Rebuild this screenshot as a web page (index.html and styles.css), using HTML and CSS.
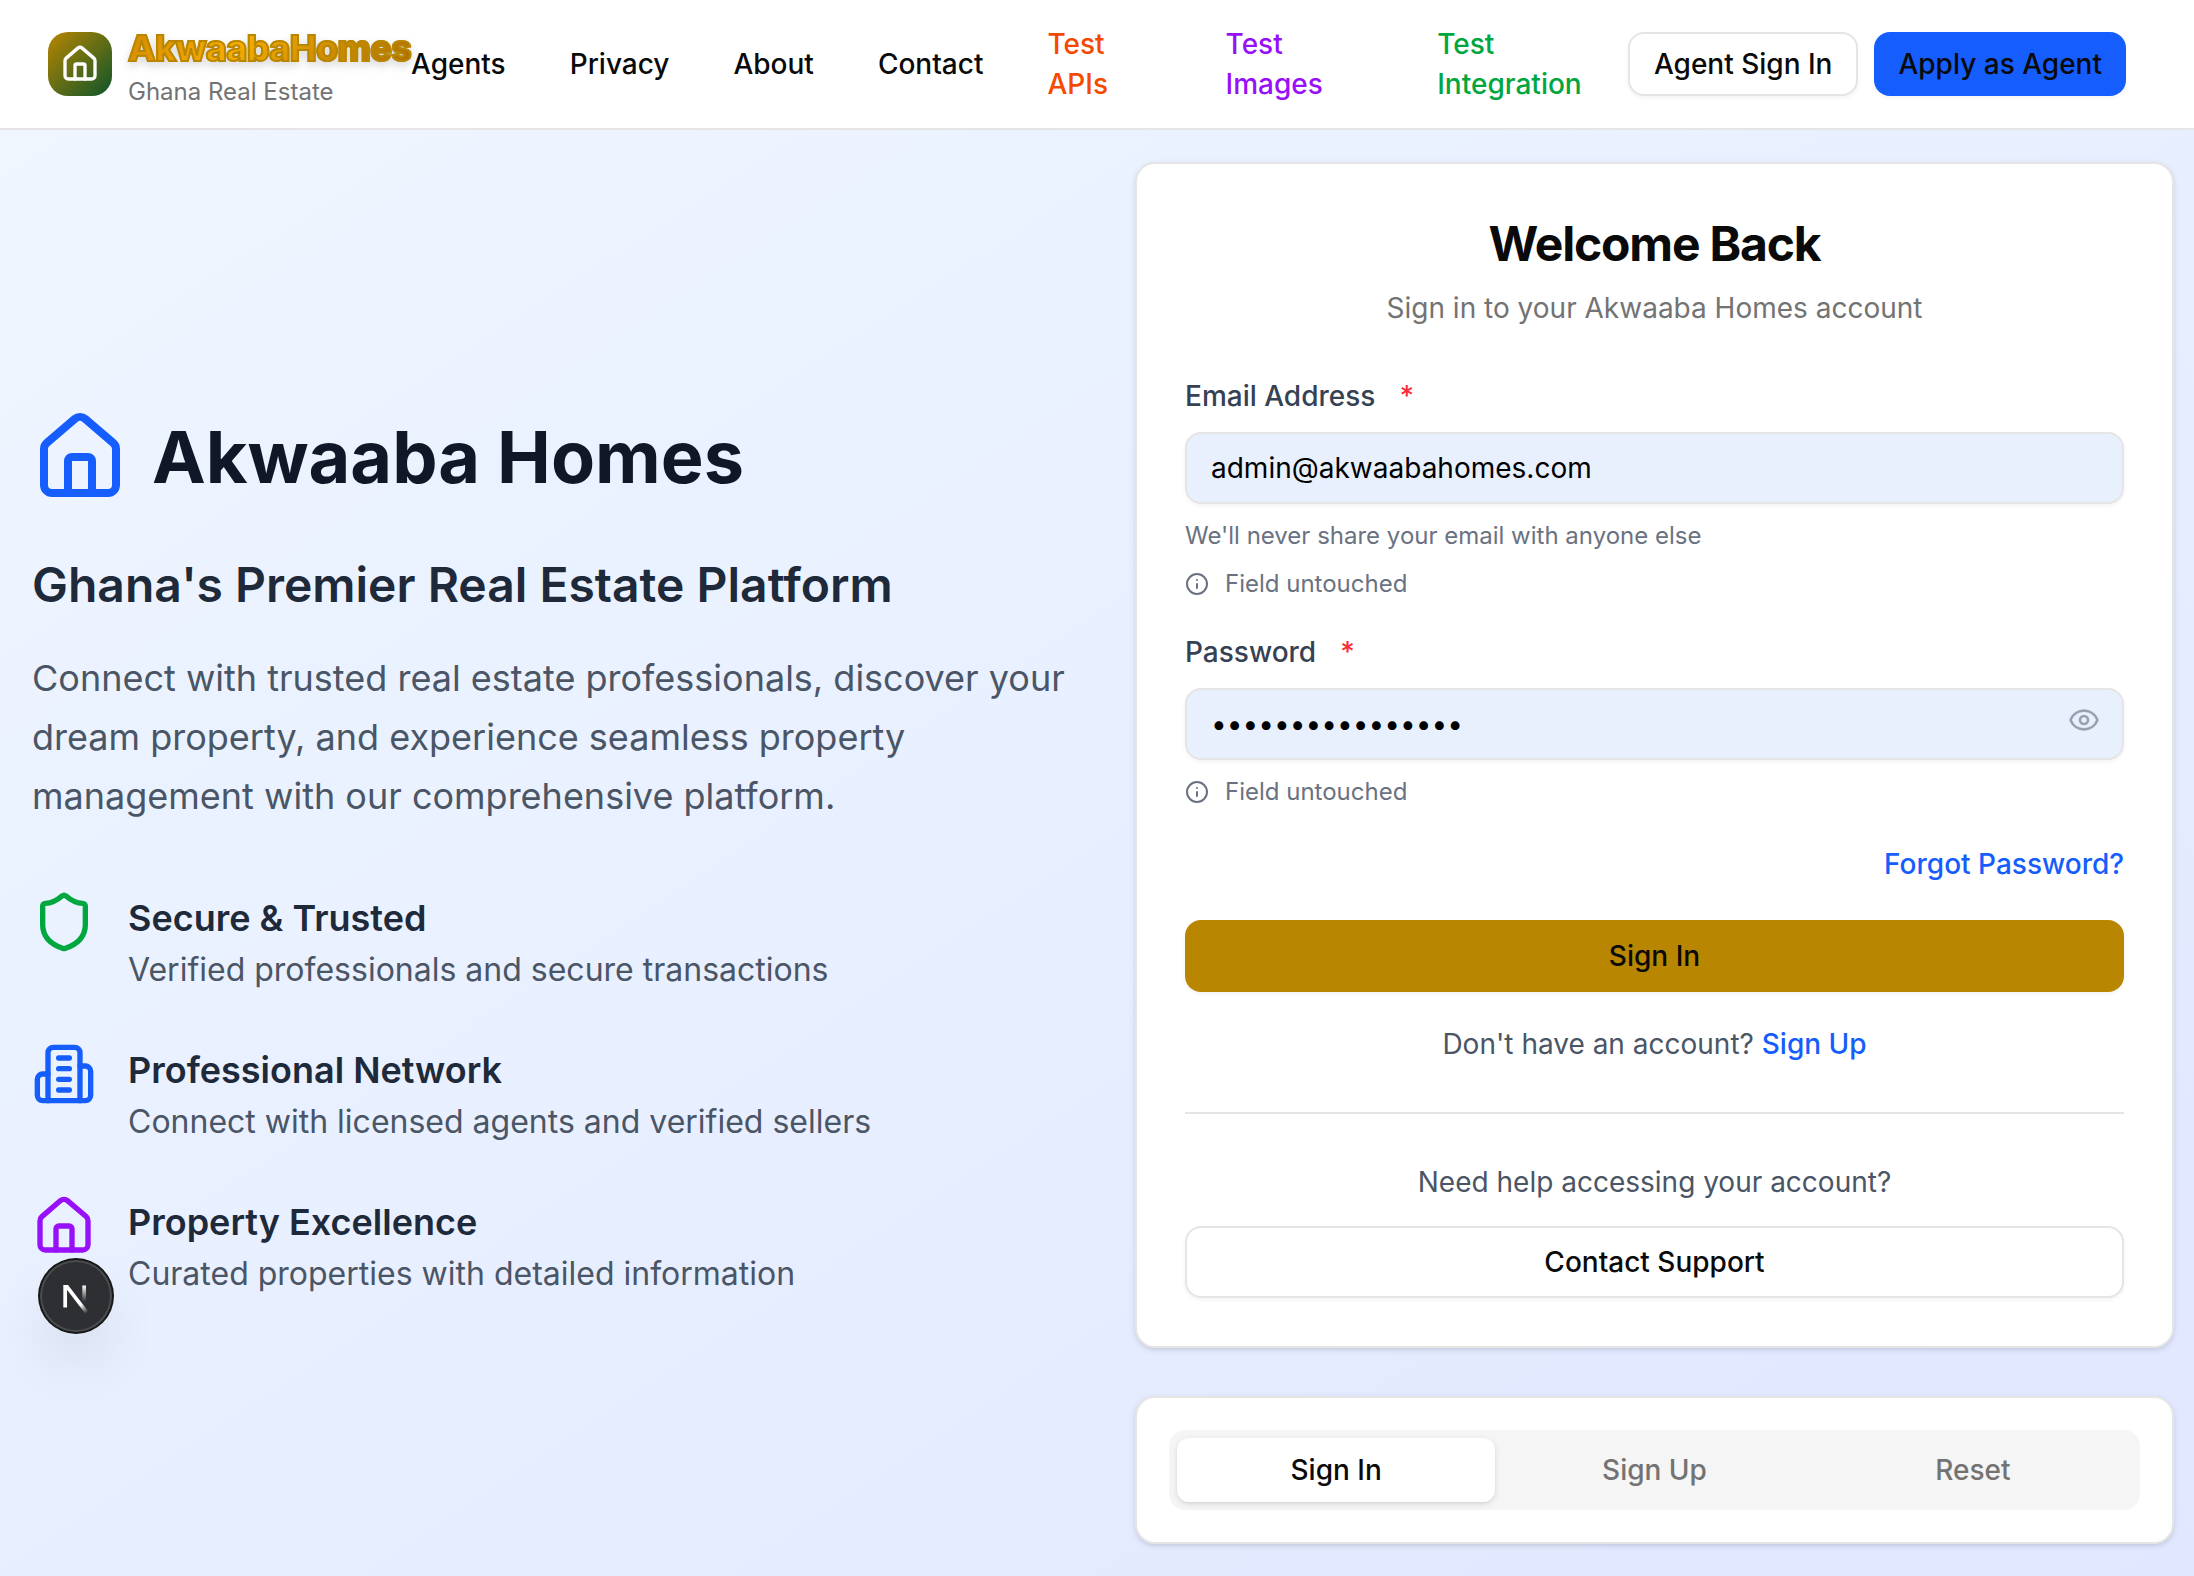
FILE: index.html
```html
<!DOCTYPE html>
<html lang="en">
<head>
<meta charset="utf-8">
<meta name="viewport" content="width=device-width, initial-scale=1">
<title>Sign In | Akwaaba Homes</title>
<link rel="stylesheet" href="styles.css">
</head>
<body>
<svg class="sprite" aria-hidden="true">
  <symbol id="icon-house" viewBox="0 0 24 24">
    <path d="M15 21v-8a1 1 0 0 0-1-1h-4a1 1 0 0 0-1 1v8"/>
    <path d="M3 10a2 2 0 0 1 .709-1.528l7-5.999a2 2 0 0 1 2.582 0l7 5.999A2 2 0 0 1 21 10v9a2 2 0 0 1-2 2H5a2 2 0 0 1-2-2z"/>
  </symbol>
  <symbol id="icon-info" viewBox="0 0 24 24">
    <circle cx="12" cy="12" r="10"/>
    <path d="M12 16v-4"/>
    <path d="M12 8h.01"/>
  </symbol>
</svg>

<header class="site-header">
  <a class="brand" href="#">
    <span class="brand-mark"><svg class="icon icon-md"><use href="#icon-house"/></svg></span>
    <span class="brand-text">
      <span class="brand-name">AkwaabaHomes</span>
      <span class="brand-tag">Ghana Real Estate</span>
    </span>
  </a>
  <nav class="site-nav">
    <a href="#">Agents</a>
    <a href="#">Privacy</a>
    <a href="#">About</a>
    <a href="#">Contact</a>
    <a class="orange" href="#">Test APIs</a>
    <a class="purple" href="#">Test Images</a>
    <a class="green" href="#">Test Integration</a>
  </nav>
  <div class="header-actions">
    <button class="btn btn-sm btn-outline" type="button">Agent Sign In</button>
    <button class="btn btn-sm btn-blue" type="button">Apply as Agent</button>
  </div>
</header>

<main class="auth">
  <section class="intro">
    <div class="intro-brand">
      <svg class="icon icon-xl blue"><use href="#icon-house"/></svg>
      <h1>Akwaaba Homes</h1>
    </div>
    <h2>Ghana's Premier Real Estate Platform</h2>
    <p class="lead">Connect with trusted real estate professionals, discover your dream property, and experience seamless property management with our comprehensive platform.</p>
    <ul class="features">
      <li>
        <svg class="icon icon-lg green" viewBox="0 0 24 24"><path d="M20 13c0 5-3.5 7.5-7.66 8.95a1 1 0 0 1-.67-.01C7.5 20.5 4 18 4 13V6a1 1 0 0 1 1-1c2 0 4.5-1.2 6.24-2.72a1.17 1.17 0 0 1 1.52 0C14.51 3.81 17 5 19 5a1 1 0 0 1 1 1z"/></svg>
        <div>
          <h3>Secure &amp; Trusted</h3>
          <p>Verified professionals and secure transactions</p>
        </div>
      </li>
      <li>
        <svg class="icon icon-lg blue" viewBox="0 0 24 24"><path d="M6 22V4a2 2 0 0 1 2-2h8a2 2 0 0 1 2 2v18Z"/><path d="M6 12H4a2 2 0 0 0-2 2v6a2 2 0 0 0 2 2h2"/><path d="M18 9h2a2 2 0 0 1 2 2v9a2 2 0 0 1-2 2h-2"/><path d="M10 6h4"/><path d="M10 10h4"/><path d="M10 14h4"/><path d="M10 18h4"/></svg>
        <div>
          <h3>Professional Network</h3>
          <p>Connect with licensed agents and verified sellers</p>
        </div>
      </li>
      <li>
        <svg class="icon icon-lg purple"><use href="#icon-house"/></svg>
        <div>
          <h3>Property Excellence</h3>
          <p>Curated properties with detailed information</p>
        </div>
      </li>
    </ul>
  </section>

  <div class="panel">
    <section class="card login">
      <h2>Welcome Back</h2>
      <p class="login-sub">Sign in to your Akwaaba Homes account</p>
      <form class="login-form">
        <div class="field">
          <label for="email">Email Address <span class="required">*</span></label>
          <input class="input" id="email" type="email" value="admin@akwaabahomes.com">
          <p class="hint">We'll never share your email with anyone else</p>
          <p class="hint"><svg class="icon icon-xs"><use href="#icon-info"/></svg>Field untouched</p>
        </div>
        <div class="field">
          <label for="password">Password <span class="required">*</span></label>
          <div class="input-wrap">
            <input class="input" id="password" type="password" value="akwaabahomes2024">
            <button class="reveal" type="button" aria-label="Show password"><svg class="icon icon-sm" viewBox="0 0 24 24"><path d="M2.062 12.348a1 1 0 0 1 0-.696 10.75 10.75 0 0 1 19.876 0 1 1 0 0 1 0 .696 10.75 10.75 0 0 1-19.876 0"/><circle cx="12" cy="12" r="3"/></svg></button>
          </div>
          <p class="hint"><svg class="icon icon-xs"><use href="#icon-info"/></svg>Field untouched</p>
        </div>
        <a class="forgot" href="#">Forgot Password?</a>
        <button class="btn btn-gold" type="submit">Sign In</button>
        <p class="signup">Don't have an account? <a href="#">Sign Up</a></p>
      </form>
      <div class="help">
        <p>Need help accessing your account?</p>
        <button class="btn btn-outline" type="button">Contact Support</button>
      </div>
    </section>
    <section class="card switcher">
      <div class="tabs" role="tablist">
        <button class="tab active" type="button" role="tab" aria-selected="true">Sign In</button>
        <button class="tab" type="button" role="tab" aria-selected="false">Sign Up</button>
        <button class="tab" type="button" role="tab" aria-selected="false">Reset</button>
      </div>
    </section>
  </div>
</main>

<button class="dev-badge" type="button" aria-label="Open developer tools">
  <svg viewBox="0 0 36 36" fill="none">
    <defs>
      <linearGradient id="fade-diagonal" x1="9.956" y1="11.123" x2="15.478" y2="17.967" gradientUnits="userSpaceOnUse"><stop stop-color="#fff"/><stop offset=".604" stop-color="#fff" stop-opacity="0"/></linearGradient>
      <linearGradient id="fade-bar" x1="11.822" y1="1.4" x2="11.791" y2="9.625" gradientUnits="userSpaceOnUse"><stop stop-color="#fff"/><stop offset="1" stop-color="#fff" stop-opacity="0"/></linearGradient>
      <clipPath id="letter-top"><rect y="1.3" width="18" height="16"/></clipPath>
    </defs>
    <g transform="translate(10.25 11.2)" stroke-width="1.86" clip-path="url(#letter-top)">
      <path d="M13.3 15.2 2.34 1v11.6" stroke="url(#fade-diagonal)"/>
      <path d="M11.825 1.5v11.6" stroke="url(#fade-bar)"/>
    </g>
  </svg>
</button>
</body>
</html>
```
FILE: styles.css
```css
* {
  box-sizing: border-box;
  margin: 0;
  padding: 0;
}

:root {
  --border: #e5e5e5;
  --ink: #0a0a0a;
  --muted: #737373;
  --blue: #155dfc;
  --gold: #b88600;
}

body {
  display: flex;
  flex-direction: column;
  min-height: 100vh;
  background: #fff;
  color: var(--ink);
  font-family: Inter, "Liberation Sans", sans-serif;
  font-size: 28px;
  line-height: 40px;
}

button, input {
  font: inherit;
  color: inherit;
}

a {
  color: inherit;
  text-decoration: none;
}

.blue { color: var(--blue); }
.green { color: #00a63e; }
.purple { color: #9810fa; }
.orange { color: #f54900; }

.sprite {
  display: none;
}

.icon {
  flex: none;
  display: block;
  fill: none;
  stroke: currentColor;
  stroke-width: 2;
  stroke-linecap: round;
  stroke-linejoin: round;
}

.icon-xs { width: 24px; height: 24px; }
.icon-sm { width: 32px; height: 32px; }
.icon-md { width: 40px; height: 40px; }
.icon-lg { width: 64px; height: 64px; }
.icon-xl { width: 96px; height: 96px; }

/* Header */
.site-header {
  display: flex;
  align-items: center;
  justify-content: space-between;
  min-height: 130px;
  padding: 0 68px 0 48px;
  border-bottom: 2px solid var(--border);
}

.brand {
  flex: none;
  display: flex;
  align-items: center;
  gap: 16px;
}

.brand-mark {
  display: flex;
  align-items: center;
  justify-content: center;
  width: 64px;
  height: 64px;
  border-radius: 20px;
  background: linear-gradient(135deg, var(--gold), #0d542b);
  color: #fff;
}

.brand-text {
  display: flex;
  flex-direction: column;
}

.brand-name {
  font-size: 36px;
  font-weight: 800;
  letter-spacing: -0.02em;
  line-height: 56px;
  background: linear-gradient(135deg, #d08700, #f5ad00 40%, #a66b00);
  background-clip: text;
  -webkit-background-clip: text;
  color: transparent;
  -webkit-text-stroke: 2px var(--gold);
  filter: drop-shadow(0 4px 4px rgb(0 0 0 / 15%));
}

.brand-tag {
  color: var(--muted);
  font-size: 24px;
  line-height: 32px;
}

.site-nav {
  display: flex;
  align-items: center;
  gap: 64px;
  font-weight: 500;
}

.header-actions {
  flex: none;
  display: flex;
  gap: 16px;
}

.btn {
  height: 72px;
  padding: 0 24px;
  border: 0;
  border-radius: 16px;
  box-shadow: 0 2px 4px rgb(0 0 0 / 5%);
  font-weight: 500;
}

.btn-sm { height: 64px; }
.btn-blue { background: var(--blue); }
.btn-gold { background: var(--gold); }

.btn-outline {
  border: 2px solid var(--border);
  background: #fff;
}

/* Two-column sign-in area */
.auth {
  flex: 1;
  display: grid;
  grid-template-columns: minmax(0, 1fr) minmax(0, 1fr);
  align-items: center;
  gap: 64px;
  padding: 32px 20px 32px 32px;
  background: linear-gradient(to bottom right, #eff6ff, #e0e7ff);
}

.intro-brand {
  display: flex;
  align-items: center;
  gap: 24px;
  margin-bottom: 48px;
}

.intro h1 {
  color: #101828;
  font-size: 72px;
  font-weight: 700;
  line-height: 80px;
}

.intro h2 {
  margin-bottom: 32px;
  color: #1e2939;
  font-size: 48px;
  font-weight: 600;
  line-height: 64px;
}

.lead {
  margin-bottom: 64px;
  color: #4a5565;
  font-size: 36px;
  line-height: 59px;
}

.features {
  display: grid;
  gap: 48px;
  list-style: none;
}

.features li {
  display: flex;
  align-items: flex-start;
  gap: 32px;
}

.features h3 {
  color: #1e2939;
  font-size: 36px;
  font-weight: 600;
  line-height: 56px;
}

.features p {
  color: #4a5565;
  font-size: 32px;
  line-height: 48px;
}

.panel {
  display: grid;
  gap: 48px;
}

.card {
  border: 2px solid var(--border);
  border-radius: 20px;
  background: #fff;
  box-shadow: 0 2px 6px rgb(0 0 0 / 10%), 0 2px 4px -2px rgb(0 0 0 / 10%);
}

.login {
  padding: 48px;
}

.login h2 {
  font-size: 48px;
  font-weight: 700;
  letter-spacing: -0.025em;
  line-height: 64px;
  text-align: center;
}

.login-sub {
  margin-top: 12px;
  color: var(--muted);
  text-align: center;
}

.login-form {
  display: grid;
  gap: 32px;
  margin-top: 48px;
}

.field {
  display: grid;
  gap: 16px;
}

.field label {
  display: flex;
  gap: 24px;
  color: #364153;
  font-weight: 500;
}

.required {
  color: #fb2c36;
}

.input {
  width: 100%;
  height: 72px;
  padding: 0 24px;
  border: 2px solid var(--border);
  border-radius: 16px;
  background: #e8f0fe;
  box-shadow: 0 2px 4px rgb(0 0 0 / 5%);
  color: #000;
}

.input-wrap {
  position: relative;
  display: flex;
}

.reveal {
  position: absolute;
  top: 16px;
  right: 24px;
  border: 0;
  background: none;
  color: #99a1af;
}

.hint {
  display: flex;
  align-items: center;
  gap: 16px;
  color: #6a7282;
  font-size: 24px;
  line-height: 32px;
}

.forgot {
  justify-self: end;
  line-height: 48px;
}

.forgot,
.signup a {
  color: var(--blue);
  font-weight: 500;
}

.signup,
.help {
  color: #4a5565;
  text-align: center;
}

.help {
  display: grid;
  gap: 24px;
  margin-top: 48px;
  padding-top: 48px;
  border-top: 2px solid var(--border);
}

.help .btn {
  color: var(--ink);
}

.switcher {
  padding: 32px;
}

.tabs {
  display: grid;
  grid-template-columns: repeat(3, 1fr);
  padding: 8px;
  border-radius: 16px;
  background: #f5f5f5;
}

.tab {
  height: 64px;
  border: 0;
  border-radius: 12px;
  background: none;
  color: var(--muted);
  font-weight: 500;
}

.tab.active {
  background: #fff;
  box-shadow: 0 2px 6px rgb(0 0 0 / 10%), 0 2px 4px -2px rgb(0 0 0 / 10%);
  color: var(--ink);
}

/* Floating badge over the page */
.dev-badge {
  position: fixed;
  bottom: 244px;
  left: 40px;
  width: 72px;
  height: 72px;
  border: 0;
  border-radius: 50%;
  background: #2e2f33;
  box-shadow: 0 0 0 2px #171717, inset 0 0 0 2px rgb(255 255 255 / 14%), 0 32px 64px -16px rgb(0 0 0 / 24%);
}

.dev-badge svg {
  display: block;
  width: 100%;
}
```
